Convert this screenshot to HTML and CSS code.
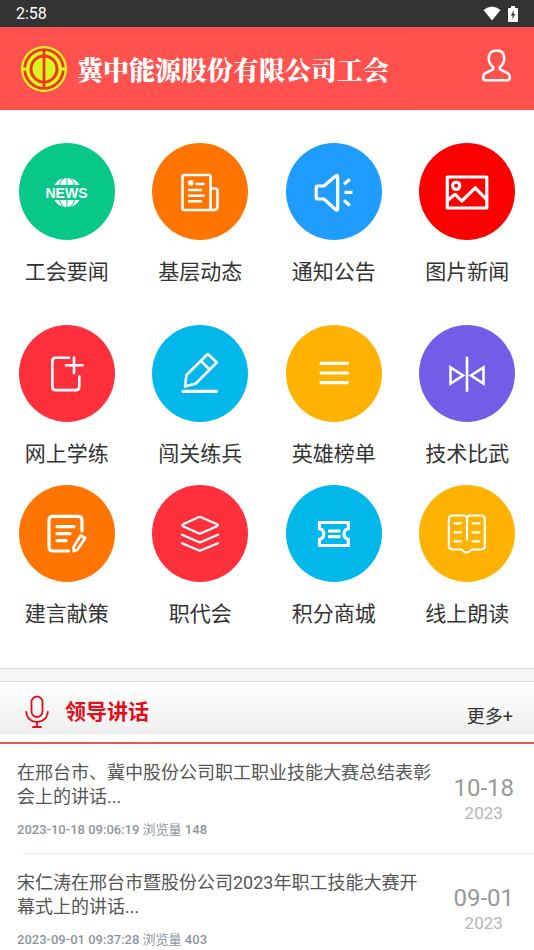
FILE: index.html
```html
<!DOCTYPE html>
<html lang="zh-CN">
<head>
<meta charset="utf-8">
<meta name="viewport" content="width=device-width, initial-scale=1">
<title>冀中能源股份有限公司工会</title>
<link rel="stylesheet" href="styles.css">
</head>
<body>
<div class="status">
  <span>2:58</span>
  <span class="status-icons">
    <svg width="18" height="15" viewBox="0 0 18 15"><path d="M0.5 4Q9-3 17.5 4L9 14.5z" fill="#fff"/></svg>
    <svg width="10" height="16" viewBox="0 0 10 16"><path d="M3 0h4v2h2q1 0 1 1v12q0 1-1 1H1q-1 0-1-1V3q0-1 1-1h2z" fill="#fff"/><path d="M6 4L2.800 9.500h2L4 13.500 7.300 8H5.500z" fill="#333"/></svg>
  </span>
</div>
<header class="header">
  <div class="brand">
    <svg class="logo" viewBox="-23 -23 46 46">
      <circle r="23" fill="#dcf51f"/>
      <circle r="19.300" fill="none" stroke="#ee3524" stroke-width="2.800"/>
      <path d="M-22-1.500h8v3h-8zM14-1.500h8v3h-8z" fill="#dcf51f"/>
      <circle r="13" fill="none" stroke="#ee3524" stroke-width="3"/>
      <path d="M0-19V18" stroke="#ee3524" stroke-width="2.800"/>
    </svg>
    <h1 class="brand-name">冀中能源股份有限公司工会</h1>
  </div>
  <a class="user" href="#user" aria-label="个人中心">
    <svg width="29" height="33" viewBox="0 0 30 34" fill="none" stroke="#fff" stroke-width="2.600" stroke-linejoin="round"><path d="M11.500 18.500C8 16 7 13 7 9.500 7 4.500 10 1.500 15 1.500s8 3 8 8c0 3.500-1 6.500-4.500 9v2.500l8 4c2 1 2.300 2.300 2.300 4.500 0 2-.5 2.700-2.300 2.700h-23c-1.800 0-2.300-.7-2.300-2.700 0-2.200.3-3.500 2.300-4.500l8-4z"/></svg>
  </a>
</header>
<main>
<nav class="menu">
  <div class="menu-grid">
    <a class="item" href="#n1"><svg class="disc green" viewBox="0 0 96 97"><path d="M35.500 42Q39 35 48 35T60.500 42zM35.500 57Q39 64 48 64T60.500 57z" fill="#fff"/><path d="M45 35Q41 38 40.500 42M51 35Q55 38 55.500 42M48 35v7M45 64Q41 61 40.500 57M51 64Q55 61 55.500 57M48 64v-7" stroke="#07c888" stroke-width="1" fill="none"/><text class="news" x="47.500" y="54.500" text-anchor="middle">NEWS</text></svg><span>工会要闻</span></a>
    <a class="item" href="#n2"><svg class="disc orange" viewBox="0 0 96 97"><g class="s"><path d="M32 32h25q1.500 0 1.500 1.500V67H32q-1.500 0-1.500-1.500V33.500Q30.500 32 32 32z"/><path d="M58.500 45.500H63q2.500 0 2.500 2.500v15q0 4-4 4h-3"/><path d="M43.500 41h9M36 47h14M36 52.700h16.500M36 58.300h14"/></g><circle cx="38.800" cy="39.700" r="2.800" fill="#fff"/></svg><span>基层动态</span></a>
    <a class="item" href="#n3"><svg class="disc blue" viewBox="0 0 96 97"><path class="s w3" d="M32 43h6L49.500 33q2.200-1.500 2.200 1V65.500q0 2.500-2.200 1L38 56h-6q-1.800 0-1.800-1.800v-9.400Q30.200 43 32 43zM58 41.300l5.700-5M58.500 49.300h8M58 57.300l5.700 5.200"/></svg><span>通知公告</span></a>
    <a class="item" href="#n4"><svg class="disc red" viewBox="0 0 96 97"><path class="s w3" d="M28.300 34h39.500v31H28.300zM29 57l7.200-5.700 6.600 6.700 13.400-13.200L67.500 56.500"/><circle class="s w3" cx="37.200" cy="42.700" r="3.600"/></svg><span>图片新闻</span></a>
  </div>
  <div class="menu-grid tight">
    <a class="item" href="#n5"><svg class="disc rose" viewBox="0 0 96 97"><path class="s r" d="M50 32.700H37q-3.700 0-3.700 3.700v25q0 3.700 3.700 3.700h19.600q3.700 0 3.700-3.700V51.500M55 32.500v15.500M47 40.300h16.500"/></svg><span>网上学练</span></a>
    <a class="item" href="#n6"><svg class="disc cyan" viewBox="0 0 96 97"><path class="s w3 r" d="M31 66.300h33.500"/><path class="s r" d="M33 61.500L34.500 50 55.800 29 64.800 37.500 43.800 58.500zM49 36l8.500 8.500"/></svg><span>闯关练兵</span></a>
    <a class="item" href="#n7"><svg class="disc amber" viewBox="0 0 96 97"><path class="s w3 r" d="M35 38.300h26.500M35 48h26.500M35 57.700h26.500"/></svg><span>英雄榜单</span></a>
    <a class="item" href="#n8"><svg class="disc violet" viewBox="0 0 96 97"><path class="s miter" d="M48 31.700v35M31.500 42.500v16l12.500-8zM64.500 42.500v16L52 50.500z"/></svg><span>技术比武</span></a>
    <a class="item" href="#n9"><svg class="disc orange" viewBox="0 0 96 97"><path class="s w3 r" d="M49.500 66H34q-4 0-4-4V35.300q0-4 4-4h25q4 0 4 4V46M38 41.700h17M38 48.700h13M38 55.700h9"/><path class="s" d="M61.700 50.500l4.500 2.500-7.700 11.500-3.800 1.800v-4.500z"/></svg><span>建言献策</span></a>
    <a class="item" href="#n10"><svg class="disc rose" viewBox="0 0 96 97"><path class="s thin r" d="M31 39.300L46.500 32.300q1.300-.6 2.600 0L65 39.300q1.500.9 0 1.900L49 48.300q-1.200.5-2.400 0L31 41.200q-1.500-.9 0-1.900zM30 49.700l17.800 7.800L66 49.700M30 58.300l17.800 7.500L66 58.300"/></svg><span>职代会</span></a>
    <a class="item" href="#n11"><svg class="disc cyan" viewBox="0 0 96 97"><path class="s w3 miter" d="M33.500 37.500h28.800v6.300a5.300 5.300 0 0 0 0 10.400v6.300H33.500v-6.300a5.300 5.300 0 0 0 0-10.400zM42 46h12.500M42 51.700h12.500"/></svg><span>积分商城</span></a>
    <a class="item" href="#n12"><svg class="disc amber" viewBox="0 0 96 97"><path class="s thin r" d="M48 54.500V34q0-3.500-4-3.500H33.800q-4 0-4 4v26q0 4 4 4H42q1.500 0 2 1.500 3.700 3 7.300 0 .5-1.500 2-1.500h8.500q4 0 4-4v-26q0-4-4-4H52q-4 0-4 3.500M35.500 38.300h6.500M35.500 47.300h6.500M35.500 56.300h6.500M53.500 38.300h7M53.500 47.300h7M53.500 56.300h7"/></svg><span>线上朗读</span></a>
  </div>
</nav>
<section class="speech">
  <div class="bar">
    <svg class="mic" width="24" height="34" viewBox="0 0 24 34" fill="none" stroke="#df0f19" stroke-width="1.800" stroke-linecap="round"><rect x="6.500" y="1.500" width="11" height="20.500" rx="5.500"/><path d="M1.200 17c.5 6 5 10 10.800 10s10.300-4 10.800-10M12 27v5M8 32h8"/></svg>
    <h2>领导讲话</h2>
    <a class="more" href="#more">更多+</a>
  </div>
  <ul class="list">
    <li>
      <article class="entry">
        <div class="text"><a class="title" href="#a1">在邢台市、冀中股份公司职工职业技能大赛总结表彰会上的讲话...</a>
        <p class="meta">2023-10-18 09:06:19 <span>浏览量</span> 148</p></div>
        <div class="date"><b>10-18</b><small>2023</small></div>
      </article>
    </li>
    <li>
      <article class="entry">
        <div class="text"><a class="title" href="#a2">宋仁涛在邢台市暨股份公司2023年职工技能大赛开幕式上的讲话...</a>
        <p class="meta">2023-09-01 09:37:28 <span>浏览量</span> 403</p></div>
        <div class="date"><b>09-01</b><small>2023</small></div>
      </article>
    </li>
  </ul>
</section>
</main>
</body>
</html>
```
FILE: styles.css
```css
* { box-sizing: border-box; margin: 0; padding: 0; }
body { font-family: Roboto, "Noto Sans CJK SC", sans-serif; background: #fff; color: #333; }
a { color: inherit; text-decoration: none; }
svg { display: block; flex: none; }

.status { display: flex; justify-content: space-between; align-items: center; height: 27px; padding: 0 16px; background: #333; color: #fff; font-size: 16px; }
.status-icons { display: flex; align-items: center; gap: 7px; }

.header { display: flex; justify-content: space-between; align-items: center; padding: 11px 23px 11px 12px; background: #ff524f; color: #fff; }
.brand { display: flex; align-items: center; gap: 10px; flex: 0 1 400px; height: 61px; padding-left: 9px; border: solid #ff5e59; border-width: 1px 0; }
.logo { width: 46px; height: 46px; }
.brand-name { font-family: "Noto Serif CJK SC", "Noto Sans CJK SC", serif; font-size: 26px; font-weight: 900; line-height: 32px; white-space: nowrap; }
.user { padding-bottom: 6px; }

.menu { padding: 33px 0 38px; }
.menu-grid { display: grid; grid-template-columns: repeat(4, 1fr); row-gap: 15px; }
.tight { margin-top: 37px; }
.item { display: flex; flex-direction: column; align-items: center; gap: 16px; font-size: 21px; line-height: 32px; }
.disc { width: 96px; height: 97px; border-radius: 50%; }
.green { background: #07c888; }
.orange { background: #ff7500; }
.blue { background: #1f9cff; }
.red { background: #fc0000; }
.rose { background: #ff2f3b; }
.cyan { background: #00b9ea; }
.amber { background: #ffb200; }
.violet { background: #735de6; }
.news { font: bold 14px "Liberation Sans", sans-serif; fill: #fff; }
.s { fill: none; stroke: #fff; stroke-width: 2.6; stroke-linejoin: round; }
.w3 { stroke-width: 3.2; }
.thin { stroke-width: 2.2; }
.r { stroke-linecap: round; }
.miter { stroke-linejoin: miter; }

.speech { border-top: 1px solid #d9d9d9; }
.speech::before { content: ""; display: block; height: 12px; background: #f6f6f6; border-bottom: 1px solid #d9d9d9; }
.bar { display: flex; align-items: center; height: 62px; padding: 0 21px 9px 25px; background: linear-gradient(#fff, #eee) 0 0 / 100% 52px no-repeat; border-bottom: 2px solid #e4555a; }
.mic { margin-top: 8px; }
.bar h2 { margin-left: 16px; padding-top: 8px; font-size: 21px; font-weight: 700; line-height: 32px; color: #df0f19; }
.more { margin-left: auto; padding-top: 18px; font-size: 18px; line-height: 24px; }

.list { list-style: none; }
.list li + li { border-top: 1px solid #eee; margin-left: 22px; }
.list li + li .entry { margin-left: -22px; }
.entry { display: flex; justify-content: space-between; gap: 8px; padding: 17px 20px 0 17px; }
.list li:not(:last-child) .entry { padding-bottom: 14px; }
.text { flex: 0 1 416px; }
.title { display: block; font-size: 18px; line-height: 24px; color: #555; }
.meta { margin-top: 12px; font-size: 13px; line-height: 18px; font-weight: 500; color: #8b95a0; }
.meta span { font-weight: 400; }
.date { flex: none; padding-top: 13px; text-align: center; }
.date b, .date small { display: block; font-weight: 400; }
.date b { font-size: 24px; line-height: 28px; color: #999; }
.date small { font-size: 17px; line-height: 22px; color: #b5b5b5; }
```
